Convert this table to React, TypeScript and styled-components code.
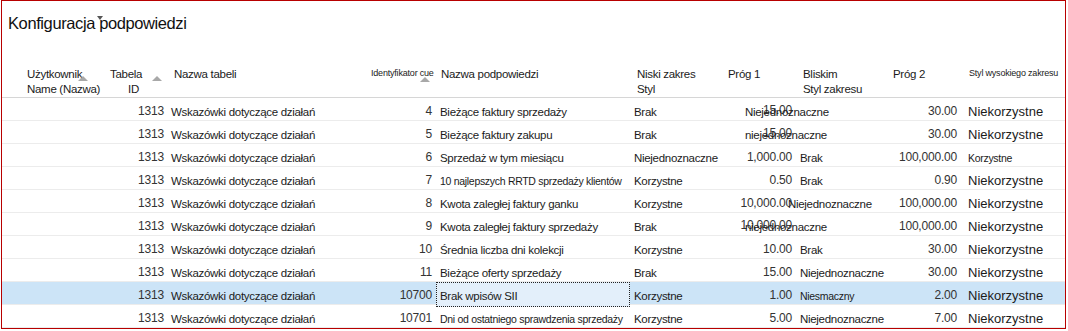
import React from "react";
import styled, { createGlobalStyle, css } from "styled-components";

const GlobalStyle = createGlobalStyle`
    html, body {
        margin: 0;
        padding: 0;
        background: #ffffff;
    }
    body {
        font-family: "Liberation Sans", Arial, sans-serif;
        color: #1b1b1b;
    }
`;

// shared column template for the header and every row
const COLUMNS = "102px 64px 198px 70px 194px 92px 74px 90px 75px 1fr";

type Size = "sm" | "md" | "lg";

interface CellData {
    text: string;
    size?: Size;
    shift?: number;
    raise?: boolean;
}

interface RowData {
    table: string;
    cue: string;
    name: CellData;
    low: CellData;
    t1: CellData;
    mid: CellData;
    t2: CellData;
    high: CellData;
    selected?: boolean;
}

const c = (text: string, extra: Omit<CellData, "text"> = {}): CellData => ({ text, ...extra });

const rows: RowData[] = [
    { table: "1313", cue: "4", name: c("Bieżące faktury sprzedaży"), low: c("Brak"), t1: c("15.00", { raise: true }), mid: c("Niejednoznaczne", { shift: -55 }), t2: c("30.00"), high: c("Niekorzystne", { size: "lg" }) },
    { table: "1313", cue: "5", name: c("Bieżące faktury zakupu"), low: c("Brak"), t1: c("15.00", { raise: true }), mid: c("niejednoznaczne", { shift: -55 }), t2: c("30.00"), high: c("Niekorzystne", { size: "lg" }) },
    { table: "1313", cue: "6", name: c("Sprzedaż w tym miesiącu"), low: c("Niejednoznaczne"), t1: c("1,000.00"), mid: c("Brak"), t2: c("100,000.00"), high: c("Korzystne", { size: "sm" }) },
    { table: "1313", cue: "7", name: c("10 najlepszych RRTD sprzedaży klientów", { size: "sm" }), low: c("Korzystne"), t1: c("0.50"), mid: c("Brak"), t2: c("0.90"), high: c("Niekorzystne", { size: "lg" }) },
    { table: "1313", cue: "8", name: c("Kwota zaległej faktury ganku"), low: c("Korzystne"), t1: c("10,000.00"), mid: c("Niejednoznaczne", { shift: -12 }), t2: c("100,000.00"), high: c("Niekorzystne", { size: "lg" }) },
    { table: "1313", cue: "9", name: c("Kwota zaległej faktury sprzedaży"), low: c("Brak"), t1: c("10,000.00", { raise: true }), mid: c("niejednoznaczne", { shift: -55 }), t2: c("100,000.00"), high: c("Niekorzystne", { size: "lg" }) },
    { table: "1313", cue: "10", name: c("Średnia liczba dni kolekcji"), low: c("Korzystne"), t1: c("10.00"), mid: c("Brak"), t2: c("30.00"), high: c("Niekorzystne", { size: "lg" }) },
    { table: "1313", cue: "11", name: c("Bieżące oferty sprzedaży"), low: c("Brak"), t1: c("15.00"), mid: c("Niejednoznaczne"), t2: c("30.00"), high: c("Niekorzystne", { size: "lg" }) },
    { table: "1313", cue: "10700", name: c("Brak wpisów SII"), low: c("Korzystne"), t1: c("1.00"), mid: c("Niesmaczny", { size: "sm" }), t2: c("2.00"), high: c("Niekorzystne", { size: "lg" }), selected: true },
    { table: "1313", cue: "10701", name: c("Dni od ostatniego sprawdzenia sprzedaży", { size: "sm" }), low: c("Korzystne"), t1: c("5.00"), mid: c("Niejednoznaczne"), t2: c("7.00"), high: c("Niekorzystne", { size: "lg" }) },
];

function App() {
    return (
        <>
            <GlobalStyle />
            <Frame>
                <Title>
                    Konfiguracja
                    <TitleMarker />
                    {" "}podpowiedzi
                </Title>

                <HeaderRow>
                    <HeadCell $pl={25}>
                        <div>Użytkownik</div>
                        <div>Name (Nazwa)</div>
                        <SortArrow $left={76} $top={9} />
                    </HeadCell>
                    <HeadCell $pl={6}>
                        <div>Tabela</div>
                        <HeadLine $indent={18}>ID</HeadLine>
                        <SortArrow $left={48} $top={9} />
                    </HeadCell>
                    <HeadCell $pl={6}>Nazwa tabeli</HeadCell>
                    <HeadCell $pl={5} $small>
                        Identyfikator cue
                        <SortArrow $left={54} $top={10} />
                    </HeadCell>
                    <HeadCell $pl={5}>Nazwa podpowiedzi</HeadCell>
                    <HeadCell $pl={7}>
                        <div>Niski zakres</div>
                        <div>Styl</div>
                    </HeadCell>
                    <HeadCell $pl={6}>Próg 1</HeadCell>
                    <HeadCell $pl={7}>
                        <div>Bliskim</div>
                        <div>Styl zakresu</div>
                    </HeadCell>
                    <HeadCell $pl={7}>Próg 2</HeadCell>
                    <HeadCell $pl={8} $small>Styl wysokiego zakresu</HeadCell>
                </HeaderRow>

                {rows.map((r) => (
                    <Row key={r.cue} $selected={r.selected}>
                        <Cell />
                        <NumCell>{r.table}</NumCell>
                        <Cell>Wskazówki dotyczące działań</Cell>
                        <NumCell>{r.cue}</NumCell>
                        <Cell $focused={r.selected} $pl={4}>
                            <Text $size={r.name.size}>{r.name.text}</Text>
                        </Cell>
                        <Cell $pl={4}>
                            <Text $size={r.low.size}>{r.low.text}</Text>
                        </Cell>
                        <NumCell $raise={r.t1.raise}>{r.t1.text}</NumCell>
                        <Cell $pl={4}>
                            <Text $size={r.mid.size} $shift={r.mid.shift}>{r.mid.text}</Text>
                        </Cell>
                        <NumCell>{r.t2.text}</NumCell>
                        <Cell $pl={7}>
                            <Text $size={r.high.size}>{r.high.text}</Text>
                        </Cell>
                    </Row>
                ))}
            </Frame>
        </>
    );
}

export default App;

const Frame = styled.div`
    box-sizing: border-box;
    margin-left: 1px;
    width: 1065px;
    height: 329px;
    border: 1px solid #b80000;
    overflow: hidden;
    display: flex;
    flex-direction: column;
`;

const Title = styled.div`
    position: relative;
    height: 63px;
    box-sizing: border-box;
    padding: 11px 0 0 6px;
    font-size: 16.5px;
    line-height: 22px;
    letter-spacing: -0.4px;
    color: #111;
`;

const TitleMarker = styled.span`
    position: absolute;
    left: 95px;
    top: 15px;
    width: 0;
    height: 0;
    border-left: 3px solid transparent;
    border-right: 3px solid transparent;
    border-top: 4px solid #555;
`;

const HeaderRow = styled.div`
    display: grid;
    grid-template-columns: ${COLUMNS};
    height: 37px;
    box-sizing: border-box;
    padding-top: 6px;
    border-bottom: 1px solid #d6d6d6;
`;

const HeadCell = styled.div<{ $pl: number; $small?: boolean }>`
    position: relative;
    padding-left: ${(p) => p.$pl}px;
    font-size: 11.5px;
    letter-spacing: -0.3px;
    line-height: 15px;
    white-space: nowrap;
    color: #1b1b1b;

    ${(p) =>
        p.$small &&
        css`
            font-size: 9px;
            letter-spacing: -0.2px;
            line-height: 13px;
        `}
`;

const HeadLine = styled.div<{ $indent: number }>`
    padding-left: ${(p) => p.$indent}px;
`;

const SortArrow = styled.span<{ $left: number; $top: number }>`
    position: absolute;
    left: ${(p) => p.$left}px;
    top: ${(p) => p.$top}px;
    width: 0;
    height: 0;
    border-left: 5px solid transparent;
    border-right: 5px solid transparent;
    border-bottom: 5px solid #a8a8a8;
`;

const Row = styled.div<{ $selected?: boolean }>`
    flex: none;
    display: grid;
    grid-template-columns: ${COLUMNS};
    height: 23px;
    box-sizing: border-box;
    border-bottom: 1px solid #ececec;
    background: ${(p) => (p.$selected ? "#cce4f7" : "transparent")};
    font-size: 11.5px;
    letter-spacing: -0.3px;
    line-height: 22px;
    white-space: nowrap;
`;

const Cell = styled.div<{ $pl?: number; $focused?: boolean }>`
    padding-left: ${(p) => p.$pl ?? 3}px;
    padding-top: 3px;
    box-sizing: border-box;
    overflow: visible;

    ${(p) =>
        p.$focused &&
        css`
            background: #e3effa;
            outline: 1px dotted #222;
            outline-offset: -1px;
        `}
`;

const NumCell = styled.div<{ $raise?: boolean }>`
    text-align: right;
    padding-right: 4px;
    padding-top: ${(p) => (p.$raise ? "1px" : "2px")};
    color: #333;
    font-size: 12px;
    letter-spacing: -0.2px;
`;

const Text = styled.span<{ $size?: Size; $shift?: number }>`
    position: relative;
    left: ${(p) => p.$shift ?? 0}px;
    font-size: ${(p) => (p.$size === "sm" ? "10.5px" : p.$size === "lg" ? "13px" : "11.5px")};
    letter-spacing: ${(p) => (p.$size === "lg" ? "0" : "-0.3px")};
`;
